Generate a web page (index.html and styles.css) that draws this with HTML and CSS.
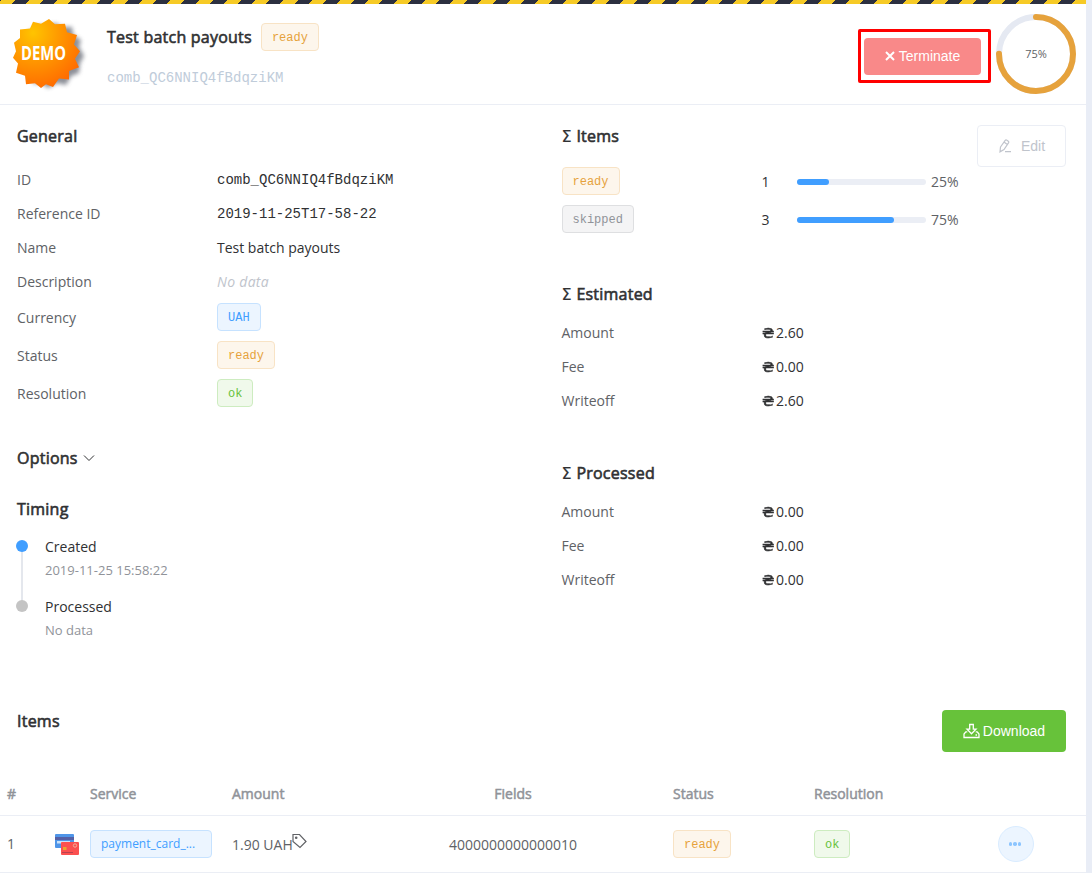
FILE: index.html
```html
<!DOCTYPE html>
<html lang="en">
<head>
<meta charset="utf-8">
<title>Test batch payouts</title>
<link rel="stylesheet" href="styles.css">
</head>
<body>
<main class="page">
  <div class="stripe"></div>
  <header class="header">
    <svg class="badge" viewBox="0 0 90 84" width="90" height="84">
      <defs>
        <radialGradient id="sun" cx="0.3" cy="0.2" r="0.85"><stop offset="0" stop-color="#ffc400"/><stop offset="0.5" stop-color="#ff9500"/><stop offset="1" stop-color="#ff6a00"/></radialGradient>
        <filter id="soft" x="-20%" y="-20%" width="140%" height="140%"><feGaussianBlur stdDeviation="2"/></filter>
      </defs>
      <path transform="translate(6 -1)" filter="url(#soft)" fill="#70737e" opacity="0.8" d="M49 14L56 18 66 18 67 26 75 31 73 38 78 47 74 54 73 64 65 67 60 76 51 74 42 79 35 74 28 75 25 65 20 61 19 51 18 38 23 23 32 16 41 17Z"/>
      <path fill="url(#sun)" d="M49 9L55 14.500 65 14 67 23 77 26 74 36 80 43 75 51 79 60 69 64 69 73 59 72 53 81 46 78 41 82 35 77 26 78 25 69 16 66 18 56 13 50 16 43 14 34 20 29 20 20 30 19 33 12 41 14Z" transform="translate(0 .5) scale(1 .945)"/>
      <text x="21" y="49.500" class="badge-text" textLength="45" lengthAdjust="spacingAndGlyphs">DEMO</text>
    </svg>
    <div class="heading">
      <div class="title-row"><h1 class="title">Test batch payouts</h1><span class="tag warning">ready</span></div>
      <div class="sub-id">comb_QC6NNIQ4fBdqziKM</div>
    </div>
    <div class="highlight">
      <button class="btn danger"><svg width="10" height="10" viewBox="0 0 10 10"><path d="M1 1L9 9M9 1L1 9" stroke="#fff" stroke-width="2"/></svg>Terminate</button>
    </div>
    <svg class="ring" width="80" height="80" viewBox="0 0 80 80">
      <circle cx="40" cy="40" r="37" fill="none" stroke="#e5e9f2" stroke-width="6"/>
      <circle cx="40" cy="40" r="37" fill="none" stroke="#e6a23c" stroke-width="6" stroke-linecap="round" stroke-dasharray="174.400 300" transform="rotate(-90 40 40)"/>
      <text x="40" y="43.500" text-anchor="middle" class="ring-text">75%</text>
    </svg>
  </header>

  <section class="details">
    <div class="left">
      <h2 class="h">General</h2>
      <dl class="rows">
        <div class="row"><dt>ID</dt><dd class="mono">comb_QC6NNIQ4fBdqziKM</dd></div>
        <div class="row"><dt>Reference ID</dt><dd class="mono">2019-11-25T17-58-22</dd></div>
        <div class="row"><dt>Name</dt><dd>Test batch payouts</dd></div>
        <div class="row"><dt>Description</dt><dd class="empty">No data</dd></div>
        <div class="row tall"><dt>Currency</dt><dd><span class="tag info">UAH</span></dd></div>
        <div class="row tall"><dt>Status</dt><dd><span class="tag warning">ready</span></dd></div>
        <div class="row tall"><dt>Resolution</dt><dd><span class="tag success">ok</span></dd></div>
      </dl>
      <h2 class="h options">Options<svg width="12" height="8" viewBox="0 0 12 8"><path d="M1 1.500L6 6.500 11 1.500" fill="none" stroke="#303133" stroke-width="1"/></svg></h2>
      <h2 class="h timing">Timing</h2>
      <ul class="timeline">
        <li class="event"><span class="dot active"></span><div>Created</div><div class="when">2019-11-25 15:58:22</div></li>
        <li class="event"><span class="dot"></span><div>Processed</div><div class="when">No data</div></li>
      </ul>
    </div>
    <div class="right">
      <h2 class="h"><span class="sigma">Σ</span> Items</h2>
      <dl class="rows">
        <div class="row tall"><dt><span class="tag warning">ready</span></dt><dd class="count">1</dd><div class="bar"><div class="fill" style="width:25%"></div></div><span class="pct">25%</span></div>
        <div class="row tall"><dt><span class="tag plain">skipped</span></dt><dd class="count">3</dd><div class="bar"><div class="fill" style="width:75%"></div></div><span class="pct">75%</span></div>
      </dl>
      <h2 class="h sum"><span class="sigma">Σ</span> Estimated</h2>
      <dl class="rows">
        <div class="row"><dt>Amount</dt><dd><span class="cur">₴</span>2.60</dd></div>
        <div class="row"><dt>Fee</dt><dd><span class="cur">₴</span>0.00</dd></div>
        <div class="row"><dt>Writeoff</dt><dd><span class="cur">₴</span>2.60</dd></div>
      </dl>
      <h2 class="h sum"><span class="sigma">Σ</span> Processed</h2>
      <dl class="rows">
        <div class="row"><dt>Amount</dt><dd><span class="cur">₴</span>0.00</dd></div>
        <div class="row"><dt>Fee</dt><dd><span class="cur">₴</span>0.00</dd></div>
        <div class="row"><dt>Writeoff</dt><dd><span class="cur">₴</span>0.00</dd></div>
      </dl>
    </div>
    <button class="btn edit"><svg width="14" height="14" viewBox="0 0 14 14" fill="none" stroke="#c0c4cc" stroke-width="1.200"><path d="M2.500 8L7 1.600Q7.800 .6 8.900 1.200L10.300 2.200Q11.200 2.900 10.500 3.900L6 10.500 2 12.800ZM6 3L9.300 5.400M7 12.700H13"/></svg>Edit</button>
  </section>

  <section class="items-head">
    <h2 class="h">Items</h2>
    <button class="btn download"><svg width="17" height="16" viewBox="0 0 17 16" fill="none" stroke="#fff" stroke-width="1.300"><path d="M6.700 1.500H10.300V6.200H13L8.500 10.800 4 6.200H6.700ZM4.300 8.800H2.800L1 11V14.500H16V11L14.200 8.800H12.700M12.500 12H14"/></svg>Download</button>
  </section>

  <div class="table">
    <div class="tr th"><span>#</span><span></span><span>Service</span><span>Amount</span><span class="center">Fields</span><span>Status</span><span>Resolution</span><span></span></div>
    <div class="tr">
      <span>1</span>
      <svg class="cards" width="24" height="22" viewBox="0 0 24 22"><rect width="19" height="14" rx="1" fill="#4f95e8"/><path d="M0 3H19V6H0Z" fill="#5560a5"/><rect x="2" y="7" width="13" height="2.500" fill="#c9e2fa"/><rect x="6" y="8" width="18" height="13" rx="1" fill="#fb5050"/><rect x="8" y="13" width="3.500" height="3" fill="#e8a52e"/><path d="M7 18.500H18" stroke="#b9414e"/><circle cx="20" cy="11.500" r="1.700" fill="none" stroke="#f2b09b"/></svg>
      <span><span class="tag info service">payment_card_...</span></span>
      <span class="amount">1.90 UAH<svg width="16" height="16" viewBox="0 0 16 16" fill="none" stroke="#606266" stroke-width="1.200"><path d="M1 1.500H7.500L14 8.500 8 14.500 1 8.500Z"/><circle cx="4.200" cy="4.800" r=".7"/></svg></span>
      <span class="center fields">4000000000000010</span>
      <span><span class="tag warning">ready</span></span>
      <span><span class="tag success">ok</span></span>
      <button class="more"><i></i><i></i><i></i></button>
    </div>
  </div>
</main>
</body>
</html>
```

FILE: styles.css
```css
* { box-sizing: border-box; }
body { margin: 0; height: 873px; overflow: hidden; background: #e9edf6; font: 14px/20px "Open Sans", sans-serif; color: #303133; }
dl, dd, ul, h1, h2 { margin: 0; padding: 0; }
.page { width: 1086px; height: 873px; background: #fff; }
.stripe { height: 4px; background: repeating-linear-gradient(-45deg, #f6ca26 0 10px, #2c3040 10px 20px); }

.header { display: flex; height: 101px; border-bottom: 1px solid #ebeef5; padding: 10px 10px 0 0; }
.badge { flex: none; margin: -4px 17px 0 0; }
.badge-text { font: 700 20px "Open Sans", sans-serif; fill: #fff; }
.heading { flex: 1; padding-top: 9px; }
.title-row { display: flex; align-items: center; gap: 9px; height: 28px; }
.title, .h { font-size: 16px; font-weight: 400; line-height: 22px; -webkit-text-stroke: 0.6px currentColor; letter-spacing: 0.23px; }
.sub-id { margin-top: 17px; font: 14px/20px "Liberation Mono", monospace; color: #c0ccda; }
.highlight { width: 133px; height: 54px; margin: 15px 5px 0 0; padding: 7px 7px 7px 3px; border: 3px solid #f00; border-radius: 2px; display: flex; align-items: center; }
.ring { flex: none; }
.ring-text { font: 11px "Open Sans", sans-serif; fill: #606266; }

.tag { display: inline-block; height: 28px; padding: 0 10px; border: 1px solid; border-radius: 4px; font: 12px/28px "Liberation Mono", monospace; white-space: nowrap; }
.warning { color: #e6a23c; background: #fdf6ec; border-color: #f8e3c5; }
.info { color: #409eff; background: #ecf5ff; border-color: #c6e2ff; }
.success { color: #67c23a; background: #f0f9eb; border-color: #cdecc0; }
.plain { color: #909399; background: #f4f4f5; border-color: #dedfe1; }

.btn { display: flex; align-items: center; justify-content: center; border: 0; border-radius: 4px; font: 14px/20px "Liberation Sans", sans-serif; color: #fff; }
.danger { flex: none; width: 117px; height: 37px; gap: 4px; background: #f98989; }
.edit { width: 89px; height: 42px; margin: 20px 20px 0 auto; gap: 9px; border: 1px solid #ebeef5; background: #fff; color: #c0c4cc; }
.download { width: 124px; height: 42px; gap: 3px; background: #67c23a; }

.details { display: flex; height: 605px; padding-left: 17px; }
.left { width: 544.5px; padding-top: 20px; }
.right { width: 400px; padding-top: 20px; }
.rows { margin-top: 16px; }
.row { display: flex; align-items: center; height: 34px; }
.row dt { width: 200px; color: #606266; }
.tall { height: 38px; }
.tall .tag { display: block; width: max-content; margin-top: -2px; }
.mono { font-family: "Liberation Mono", monospace; }
.empty { font-style: italic; color: #c0c4cc; letter-spacing: 0.3px; }
.options { display: flex; align-items: center; gap: 5px; margin-top: 34px; }
.timing { margin-top: 29px; }
.timeline { list-style: none; margin-top: 17px; }
.event { position: relative; height: 60px; padding-left: 28px; }
.event:first-child::before { content: ""; position: absolute; left: 4px; top: 9px; width: 2px; height: 60px; background: #e4e7ed; }
.dot { position: absolute; left: -1px; top: 3px; width: 12px; height: 12px; border-radius: 50%; background: #c4c4c4; }
.active { background: #409eff; }
.when { margin-top: 3px; font-size: 13px; color: #909399; }
.sum { margin-top: 44px; }
.sum + .rows { margin-top: 11px; }
.sigma { display: inline-block; width: 10.5px; font-family: "DejaVu Sans", sans-serif; line-height: 20px; -webkit-text-stroke: 0.2px currentColor; }
.count { width: 35.5px; }
.bar { width: 129px; height: 6px; border-radius: 3px; background: #ebeef5; }
.fill { height: 6px; border-radius: 3px; background: #409eff; }
.pct { margin-left: 5px; color: #606266; }
.cur { display: inline-block; width: 14.5px; font: 14px/20px "DejaVu Sans", sans-serif; -webkit-text-stroke: 0.5px currentColor; transform: scaleX(1.15); transform-origin: left; }

.items-head { display: flex; justify-content: space-between; height: 62px; padding: 0 20px 0 17px; }
.tr { display: grid; grid-template-columns: 48px 35px 142px 184px 257px 141px 184px auto; align-items: center; height: 57px; padding-left: 7px; border-bottom: 1px solid #ebeef5; color: #606266; }
.th { height: 44px; color: #909399; -webkit-text-stroke: 0.5px currentColor; }
.center { width: 194px; text-align: center; }
.amount { display: flex; padding-top: 2px; }
.amount svg { margin: -2px 0 0 -1px; }
.fields { padding-top: 2px; }
.cards { margin-top: 2px; }
.tr .tag { display: block; width: max-content; }
.tr .service { width: 122px; font: 12px/26px "Open Sans", sans-serif; }
.more { display: flex; align-items: center; justify-content: center; gap: 1px; width: 36px; height: 36px; padding: 0 2px 0 0; border: 1px solid #d9ecff; border-radius: 50%; background: #ecf5ff; }
.more i { width: 3.5px; height: 3.5px; border-radius: 50%; background: #8cc5ff; }
```
